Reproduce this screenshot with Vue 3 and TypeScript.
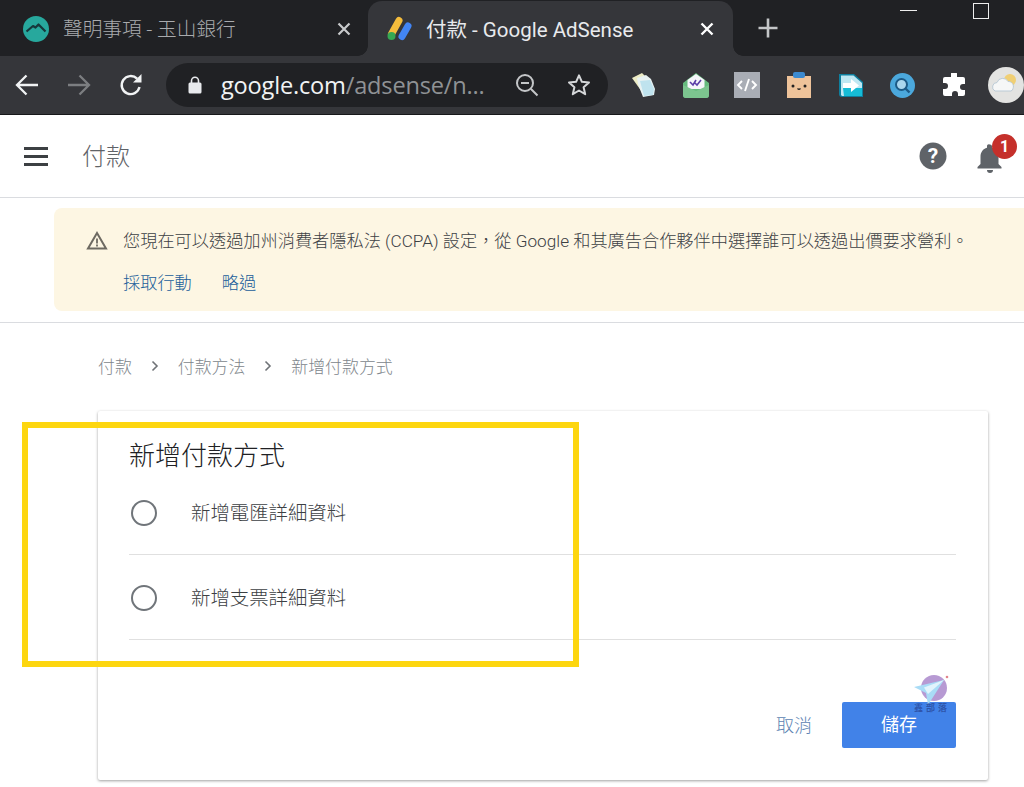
<script setup lang="ts">
const rows: string[] = ['新增電匯詳細資料', '新增支票詳細資料']
</script>

<template>
  <div class="screen">
    <div class="tabstrip">
      <div class="tab">
        <svg class="fav" width="26" height="26" viewBox="0 0 26 26">
          <circle cx="13" cy="13" r="13" fill="#27a89d" />
          <path d="M3.500 15.500 10 10l2.500 1.500 3-3 7 7" fill="none" stroke="#16383b" stroke-width="2.200" stroke-linejoin="round" />
        </svg>
        <span class="tab-title">聲明事項 - 玉山銀行</span>
        <svg class="tab-x" width="14" height="14" viewBox="0 0 14 14">
          <path d="M1.500 1.500l11 11M12.500 1.500l-11 11" stroke="#c8cacc" stroke-width="2.200" />
        </svg>
      </div>
      <div class="tab active">
        <svg class="fav" width="28" height="26" viewBox="0 0 28 26">
          <path d="M4.500 18 12 4.500" stroke="#f5bd3c" stroke-width="7" stroke-linecap="round" />
          <circle cx="4.500" cy="20" r="4" fill="#35a853" />
          <path d="M15 20.500 21 10" stroke="#4285f4" stroke-width="7" stroke-linecap="round" />
        </svg>
        <span class="tab-title bright">付款 - Google AdSense</span>
        <svg class="tab-x" width="14" height="14" viewBox="0 0 14 14">
          <path d="M1.500 1.500l11 11M12.500 1.500l-11 11" stroke="#fff" stroke-width="2.400" />
        </svg>
      </div>
      <svg class="plus" width="20" height="20" viewBox="0 0 20 20">
        <path d="M10 .5v19M.5 10h19" stroke="#c4c6c8" stroke-width="2.600" />
      </svg>
      <div class="winctl">
        <span class="win-min"></span>
        <span class="win-max"></span>
      </div>
    </div>

    <div class="toolbar">
      <div class="nav-btns">
        <svg width="24" height="22" viewBox="0 0 24 22">
          <path d="M23 11H2M11.500 1.500 2 11l9.500 9.500" fill="none" stroke="#f1f3f4" stroke-width="2.300" />
        </svg>
        <svg width="24" height="22" viewBox="0 0 24 22">
          <path d="M1 11h21M12.500 1.500 22 11l-9.500 9.500" fill="none" stroke="#7c7e81" stroke-width="2.300" />
        </svg>
        <svg width="24" height="24" viewBox="0 0 24 24">
          <path d="M20.500 14a9 9 0 1 1-2.400-8.300" fill="none" stroke="#f1f3f4" stroke-width="2.400" />
          <path d="M14 9.500h8.500V1z" fill="#f1f3f4" />
        </svg>
      </div>
      <div class="omnibox">
        <svg class="lock" width="14" height="18" viewBox="0 0 14 18">
          <path d="M3.500 7V4.800a3.500 3.500 0 0 1 7 0V7" fill="none" stroke="#e8eaed" stroke-width="1.600" />
          <rect x="0.500" y="6.500" width="13" height="11" rx="1.500" fill="#e8eaed" />
        </svg>
        <span class="url"><span class="url-host">google.com</span><span class="url-path">/adsense/n...</span></span>
        <svg class="zoom-ic" width="24" height="24" viewBox="0 0 24 24">
          <circle cx="10" cy="10" r="8" fill="none" stroke="#c4c6c8" stroke-width="2" />
          <path d="M6 10h8M16 16l6.500 6.500" stroke="#c4c6c8" stroke-width="2" />
        </svg>
        <svg class="star" width="24" height="24" viewBox="0 0 24 24">
          <path d="M12 2.300l2.900 6.500 7.100.7-5.400 4.700 1.600 7-6.200-3.700-6.200 3.700 1.600-7L2 9.500l7.100-.7z" fill="none" stroke="#d5d7d9" stroke-width="2" stroke-linejoin="round" />
        </svg>
      </div>
      <div class="exts">
        <span class="ext">
          <svg width="26" height="26" viewBox="0 0 26 26">
            <path d="M1 6l10-5 6 6-6 13z" fill="#ecebc4" />
            <path d="M6 6l9-3 5 4 4 10-1 6-11 2-5-13z" fill="#e8f2f2" />
            <path d="M9 9l10-1 4 9-1 6-9 1z" fill="#bfe3ee" />
          </svg>
        </span>
        <span class="ext">
          <svg width="28" height="26" viewBox="0 0 28 26">
            <path d="M1 11 14 1l13 10v12a3 3 0 0 1-3 3H4a3 3 0 0 1-3-3z" fill="#66bb7e" />
            <path d="M5.500 8 14 2l8.500 6v9h-17z" fill="#f6f6fa" />
            <path d="M8 10l3 3 3-5M13 11l2 2 4-5" fill="none" stroke="#5c3fa8" stroke-width="1.600" />
            <path d="M1 13l13 6 13-6v10a3 3 0 0 1-3 3H4a3 3 0 0 1-3-3z" fill="#7cc58f" />
          </svg>
        </span>
        <span class="ext">
          <svg width="26" height="26" viewBox="0 0 26 26">
            <rect width="26" height="26" fill="#a9adb5" />
            <path d="M8 9l-4 4 4 4M18 9l4 4-4 4M15 7l-4 12" fill="none" stroke="#fff" stroke-width="1.900" />
          </svg>
        </span>
        <span class="ext">
          <svg width="24" height="26" viewBox="0 0 24 26">
            <rect y="4" width="24" height="22" fill="#eec39a" />
            <rect x="6" width="12" height="6" rx="2" fill="#3b8ad0" />
            <circle cx="6" cy="14" r="1.500" fill="#222" />
            <circle cx="18" cy="14" r="1.500" fill="#222" />
            <path d="M10.500 16.500q1.500 1.500 3 0" fill="none" stroke="#222" stroke-width="1.200" />
          </svg>
        </span>
        <span class="ext">
          <svg width="24" height="24" viewBox="0 0 24 24">
            <path d="M0 1h15l9 8v15H3a3 3 0 0 1-3-3z" fill="#0e7f9e" />
            <path d="M2 2.500h12.500L23 10v13H3l-1-1z" fill="#bfe7f2" />
            <path d="M4 15h19v8H5z" fill="#16bcd6" />
            <path d="M4 10h8V6l8 6.500-8 6.500v-4H4z" fill="#fff" />
          </svg>
        </span>
        <span class="ext">
          <svg width="25" height="25" viewBox="0 0 25 25">
            <circle cx="12.500" cy="12.500" r="12.500" fill="#4ba8dc" />
            <circle cx="11.500" cy="11.500" r="5.500" fill="#a9d6ee" stroke="#1c5a86" stroke-width="2" />
            <path d="M15.500 15.500l4 4" stroke="#1c5a86" stroke-width="2.400" />
          </svg>
        </span>
        <span class="ext">
          <svg width="24" height="24" viewBox="0 0 24 24">
            <path d="M9 1a3 3 0 0 1 6 0v3h6a2 2 0 0 1 2 2v5h-2a3 3 0 0 0 0 6h2v4a2 2 0 0 1-2 2h-5v-2a3 3 0 0 0-6 0v2H3a2 2 0 0 1-2-2v-5h2a3 3 0 0 0 0-6H1V6a2 2 0 0 1 2-2h6z" fill="#fff" />
          </svg>
        </span>
        <span class="ext">
          <svg width="36" height="36" viewBox="0 0 36 36">
            <circle cx="18" cy="18" r="18" fill="#e3e3e1" />
            <circle cx="22" cy="13" r="6" fill="#f0cf74" />
            <path d="M7 24a4.500 4.500 0 0 1 2-8.500 6 6 0 0 1 11-1 5 5 0 0 1 5 7 3 3 0 0 1-2 2.500z" fill="#f6f7f7" stroke="#bccbd6" stroke-width="1" />
          </svg>
        </span>
      </div>
    </div>

    <div class="page">
      <header class="head">
        <div class="burger"><i></i><i></i><i></i></div>
        <h1 class="title">付款</h1>
        <svg class="help" width="28" height="28" viewBox="0 0 28 28">
          <circle cx="14" cy="14" r="13.500" fill="#5f6368" />
          <text x="14" y="21" text-anchor="middle" class="help-q">?</text>
        </svg>
        <div class="bell-wrap">
          <svg width="26" height="30" viewBox="0 0 26 30">
            <path d="M13 1.500a2 2 0 0 1 2 2v1.300c4 1 6.500 4.500 6.500 9V21l3 3v1.500H.5V24l3-3v-7.200c0-4.500 2.500-8 6.500-9V3.500a2 2 0 0 1 3-2z" fill="#5f6368" />
            <path d="M10 27h6a3 3 0 0 1-6 0z" fill="#5f6368" />
          </svg>
          <span class="badge">1</span>
        </div>
      </header>

      <section class="notice-band">
        <div class="notice">
          <svg class="warn" width="22" height="19" viewBox="0 0 22 19">
            <path d="M11 2 20 17.500H2z" fill="none" stroke="#6e6a62" stroke-width="2" />
            <path d="M11 7.500v5M11 13.500v2" stroke="#6e6a62" stroke-width="1.800" />
          </svg>
          <div class="notice-body">
            <p class="notice-text">您現在可以透過加州消費者隱私法 (CCPA) 設定，從 Google 和其廣告合作夥伴中選擇誰可以透過出價要求營利。</p>
            <div class="notice-links">
              <a>採取行動</a>
              <a>略過</a>
            </div>
          </div>
        </div>
      </section>

      <nav class="crumbs">
        <span>付款</span>
        <svg width="8" height="12" viewBox="0 0 8 12"><path d="M1.500 1.500 6 6l-4.500 4.500" fill="none" stroke="#6f7377" stroke-width="1.600" /></svg>
        <span>付款方法</span>
        <svg width="8" height="12" viewBox="0 0 8 12"><path d="M1.500 1.500 6 6l-4.500 4.500" fill="none" stroke="#6f7377" stroke-width="1.600" /></svg>
        <span>新增付款方式</span>
      </nav>

      <section class="card">
        <h2 class="card-title">新增付款方式</h2>
        <label v-for="row in rows" :key="row" class="row">
          <span class="radio"></span>
          <span class="row-text">{{ row }}</span>
        </label>
        <div class="actions">
          <a class="cancel">取消</a>
          <button class="save" type="button">儲存</button>
        </div>
      </section>
    </div>

    <div class="highlight"></div>

    <div class="mark">
      <svg width="36" height="30" viewBox="0 0 36 30">
        <circle cx="20" cy="13" r="13" fill="#b79ad3" />
        <circle cx="33" cy="2" r="1.300" fill="#e2848c" />
        <path d="M0 12 30 5 14 30l-2-12z" fill="#a9dcf6" />
        <path d="M10 12.500 30 5 14 19z" fill="#e2f4fc" />
      </svg>
      <span class="mark-text">鑫部落</span>
    </div>
  </div>
</template>

<style>
html, body { margin: 0; padding: 0; background: #fff; }
</style>

<style scoped>
.screen {
  position: relative;
  width: 1024px;
  height: 787px;
  overflow: hidden;
  background: #fff;
  font-family: "Noto Sans CJK TC", "Noto Sans", sans-serif;
}
.tabstrip {
  display: flex;
  align-items: stretch;
  height: 56px;
  background: #202124;
}
.tab {
  display: flex;
  flex: none;
  align-items: center;
  width: 368px;
  box-sizing: border-box;
  padding: 2px 17px 0 23px;
}
.tab.active {
  position: relative;
  width: 365px;
  margin-top: 1px;
  padding: 0 19px 0 19px;
  background: #35363a;
  border-radius: 14px 14px 0 0;
}
.tab.active::before,
.tab.active::after {
  content: "";
  position: absolute;
  bottom: 0;
  width: 10px;
  height: 10px;
}
.tab.active::before {
  left: -10px;
  background: radial-gradient(circle at 0 0, #202124 9.500px, #35363a 10px);
}
.tab.active::after {
  right: -10px;
  background: radial-gradient(circle at 100% 0, #202124 9.500px, #35363a 10px);
}
.fav { flex: none; }
.tab-title {
  flex: 1;
  margin-left: 14px;
  margin-bottom: 3px;
  color: #a9abae;
  font-size: 19.700px;
  font-weight: 300;
  white-space: nowrap;
}
.tab-title.bright {
  margin-left: 11px;
  margin-bottom: 1px;
  color: #e8eaed;
  font-family: "Roboto", "Noto Sans CJK TC", sans-serif;
  font-size: 20.500px;
  font-weight: 400;
}
.tab-x { flex: none; }
.plus {
  align-self: center;
  flex: none;
  margin-left: 25px;
}
.winctl {
  display: flex;
  flex: none;
  align-items: flex-start;
  margin-left: 122px;
  padding-top: 3px;
}
.win-min {
  width: 17px;
  height: 1px;
  margin-top: 7px;
  background: #eee;
}
.win-max {
  width: 14px;
  height: 14px;
  margin-left: 56px;
  border: 1.500px solid #eee;
}
.toolbar {
  display: flex;
  align-items: center;
  height: 58px;
  background: #35363a;
  border-bottom: 1px solid #17181a;
}
.nav-btns {
  display: flex;
  flex: none;
  align-items: center;
  gap: 28px;
  width: 166px;
  box-sizing: border-box;
  padding-left: 15px;
}
.omnibox {
  display: flex;
  flex: none;
  align-items: center;
  width: 442px;
  height: 44px;
  box-sizing: border-box;
  padding: 0 17px 0 22px;
  background: #202124;
  border-radius: 22px;
}
.lock { flex: none; }
.url {
  flex: 1;
  margin-left: 19px;
  font-family: "Open Sans", "Noto Sans", sans-serif;
  font-size: 23.600px;
  letter-spacing: -0.200px;
  white-space: nowrap;
}
.url-host { color: #f1f3f4; }
.url-path { color: #8f9295; }
.zoom-ic { flex: none; }
.star { flex: none; margin-left: 28px; }
.exts {
  display: flex;
  flex: none;
  align-items: center;
  margin-left: 10px;
}
.ext {
  display: flex;
  justify-content: center;
  width: 51.700px;
  flex: none;
}
.head {
  display: flex;
  align-items: center;
  height: 83px;
  box-sizing: border-box;
  padding: 0 0 0 24px;
  border-bottom: 1px solid #dadce0;
}
.burger {
  display: flex;
  flex-direction: column;
  gap: 5px;
  width: 24px;
}
.burger i {
  display: block;
  height: 3px;
  background: #3c4043;
}
.title {
  flex: 1;
  margin: 0 0 3px 34px;
  color: #5f6368;
  font-size: 24px;
  font-weight: 300;
}
.help { flex: none; margin-right: 30px; }
.help-q {
  fill: #fff;
  font-family: "Roboto", sans-serif;
  font-size: 21px;
  font-weight: 700;
}
.bell-wrap {
  position: relative;
  display: flex;
  width: 47px;
  margin-top: 3px;
}
.badge {
  position: absolute;
  left: 15px;
  top: -9px;
  display: flex;
  align-items: center;
  justify-content: center;
  width: 25px;
  height: 25px;
  border-radius: 50%;
  background: #c5302b;
  color: #fff;
  font-family: "Roboto", sans-serif;
  font-size: 16px;
  font-weight: 700;
}
.notice-band {
  height: 125px;
  box-sizing: border-box;
  padding: 10px 0 0 54px;
  border-bottom: 1px solid #dadce0;
}
.notice {
  display: flex;
  height: 103px;
  box-sizing: border-box;
  padding: 22px 0 0 32px;
  background: #fdf6e3;
  border-radius: 8px 0 0 8px;
}
.warn { flex: none; margin-top: 1px; }
.notice-body {
  margin-left: 15px;
  min-width: 0;
}
.notice-text {
  margin: 0;
  color: #3c4043;
  font-size: 17.200px;
  line-height: 22px;
  white-space: nowrap;
  font-family: "Roboto", "Noto Sans CJK TC", sans-serif;
  font-weight: 300;
}
.notice-links {
  display: flex;
  gap: 30px;
  margin-top: 19px;
  color: #1a5e9a;
  font-size: 17.200px;
  line-height: 22px;
  font-weight: 300;
}
.crumbs {
  display: flex;
  align-items: center;
  gap: 19px;
  height: 88px;
  box-sizing: border-box;
  padding: 0 0 3px 98px;
  color: #80868b;
  font-size: 16.900px;
  font-weight: 300;
}
.card {
  display: flex;
  flex-direction: column;
  width: 890px;
  height: 369px;
  box-sizing: border-box;
  margin-left: 98px;
  padding: 23px 32px 0 31px;
  background: #fff;
  border-radius: 2px;
  box-shadow: 0 1px 3px rgba(0, 0, 0, 0.38);
}
.card-title {
  margin: 0 0 -4px;
  color: #202124;
  font-size: 26px;
  line-height: 40px;
  font-weight: 300;
}
.row {
  display: flex;
  align-items: center;
  height: 84px;
  box-sizing: border-box;
  padding-top: 2px;
  flex: none;
  box-shadow: 0 1px 0 #e0e0e0;
  margin-bottom: 1px;
}
.radio {
  flex: none;
  width: 22px;
  height: 22px;
  margin-left: 2px;
  border: 2px solid #70757a;
  border-radius: 50%;
}
.row-text {
  margin-left: 34px;
  margin-bottom: 3px;
  color: #3c4043;
  font-size: 19.400px;
  font-weight: 300;
}
.actions {
  display: flex;
  align-items: center;
  justify-content: flex-end;
  margin-top: 62px;
}
.cancel {
  margin-bottom: 2px;
  color: #5d84b3;
  font-size: 18px;
  font-weight: 300;
}
.save {
  width: 114px;
  height: 46px;
  margin-left: 30px;
  padding: 0 0 4px;
  border: 0;
  border-radius: 2px;
  background: #4182e8;
  color: #fff;
  font-family: inherit;
  font-size: 18px;
  font-weight: 400;
}
.highlight {
  position: absolute;
  left: 22px;
  top: 422px;
  width: 545px;
  height: 233px;
  border: 6px solid #fdd60f;
}
.mark {
  position: absolute;
  left: 913px;
  top: 675px;
  display: flex;
  flex-direction: column;
  align-items: center;
  width: 38px;
}
.mark-text {
  margin-top: -3px;
  color: rgba(40, 70, 150, 0.75);
  font-size: 9px;
  line-height: 12px;
  letter-spacing: 3px;
  white-space: nowrap;
  font-weight: 700;
}
</style>
